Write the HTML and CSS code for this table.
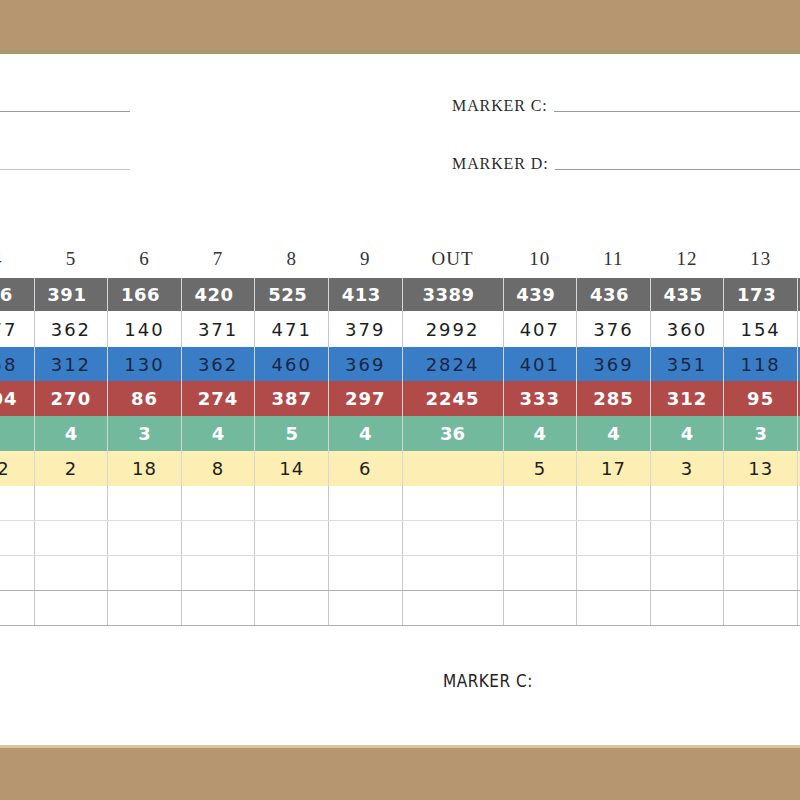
FILE: index.html
```html
<!DOCTYPE html>
<html>
<head>
<meta charset="utf-8">
<link rel="stylesheet" href="styles.css">
</head>
<body>
<div class="band band-top"></div>
<section class="markers">
  <div class="markers-left">
    <div class="mrow"><span class="fill"></span></div>
    <div class="mrow"><span class="fill light"></span></div>
  </div>
  <div class="markers-right">
    <div class="mrow"><span class="label">MARKER C:</span><span class="fill"></span></div>
    <div class="mrow"><span class="label">MARKER D:</span><span class="fill"></span></div>
  </div>
</section>
<table class="card">
  <colgroup>
    <col class="c"><col class="c"><col class="c"><col class="c"><col class="c"><col class="c">
    <col class="out">
    <col class="c"><col class="c"><col class="c"><col class="c"><col class="c">
  </colgroup>
  <tr class="head"><td>4</td><td>5</td><td>6</td><td>7</td><td>8</td><td>9</td><td>OUT</td><td>10</td><td>11</td><td>12</td><td>13</td><td></td></tr>
  <tr class="gray"><td>366</td><td>391</td><td>166</td><td>420</td><td>525</td><td>413</td><td>3389</td><td>439</td><td>436</td><td>435</td><td>173</td><td></td></tr>
  <tr class="white"><td>377</td><td>362</td><td>140</td><td>371</td><td>471</td><td>379</td><td>2992</td><td>407</td><td>376</td><td>360</td><td>154</td><td></td></tr>
  <tr class="blue"><td>358</td><td>312</td><td>130</td><td>362</td><td>460</td><td>369</td><td>2824</td><td>401</td><td>369</td><td>351</td><td>118</td><td></td></tr>
  <tr class="red"><td>304</td><td>270</td><td>86</td><td>274</td><td>387</td><td>297</td><td>2245</td><td>333</td><td>285</td><td>312</td><td>95</td><td></td></tr>
  <tr class="green"><td></td><td>4</td><td>3</td><td>4</td><td>5</td><td>4</td><td>36</td><td>4</td><td>4</td><td>4</td><td>3</td><td></td></tr>
  <tr class="yellow"><td>12</td><td>2</td><td>18</td><td>8</td><td>14</td><td>6</td><td></td><td>5</td><td>17</td><td>3</td><td>13</td><td></td></tr>
  <tr class="blank"><td></td><td></td><td></td><td></td><td></td><td></td><td></td><td></td><td></td><td></td><td></td><td></td></tr>
  <tr class="blank"><td></td><td></td><td></td><td></td><td></td><td></td><td></td><td></td><td></td><td></td><td></td><td></td></tr>
  <tr class="blank dark"><td></td><td></td><td></td><td></td><td></td><td></td><td></td><td></td><td></td><td></td><td></td><td></td></tr>
  <tr class="blank dark last"><td></td><td></td><td></td><td></td><td></td><td></td><td></td><td></td><td></td><td></td><td></td><td></td></tr>
</table>
<div class="footer"><span class="foot-label">MARKER C:</span></div>
<div class="band band-bottom"></div>
</body>
</html>
```
FILE: styles.css
```css
html, body {
  margin: 0;
  padding: 0;
}
body {
  width: 800px;
  height: 800px;
  overflow: hidden;
  background: #ffffff;
  font-family: "DejaVu Sans", sans-serif;
}
.band {
  background: #b69670;
}
.band-top {
  height: 50px;
  border-bottom: 4px solid #a8986c;
}
.band-bottom {
  height: 52px;
  border-top: 3px solid #d9c79c;
}
.markers {
  display: flex;
  height: 186px;
}
.markers-left {
  width: 130px;
  display: flex;
  flex-direction: column;
}
.markers-right {
  margin-left: 322px;
  flex: 1;
  display: flex;
  flex-direction: column;
}
.mrow {
  height: 58px;
  display: flex;
  align-items: flex-end;
}
.label {
  font-family: "Liberation Serif", serif;
  font-size: 16px;
  letter-spacing: 0.9px;
  color: #2b2b2b;
  line-height: 16px;
  margin-bottom: -2px;
  white-space: nowrap;
}
.fill {
  flex: 1;
  margin-left: 6px;
  border-bottom: 1px solid #9a9a9a;
}
.markers-left .fill {
  margin-left: 0;
}
.fill.light {
  border-bottom-color: #c4c4c4;
}
.card {
  margin-left: -40px;
  border-collapse: collapse;
  table-layout: fixed;
  width: 910px;
}
.card col.c { width: 73.6px; }
.card col.out { width: 101px; }
.card td {
  padding: 0;
  text-align: center;
  font-size: 18px;
  border-left: 1px solid rgba(0,0,0,0.16);
  border-right: 1px solid rgba(0,0,0,0.16);
  white-space: nowrap;
  overflow: hidden;
}
.head td {
  height: 38px;
  border: none;
  font-family: "Liberation Serif", serif;
  font-size: 19px;
  color: #333;
  letter-spacing: 1px;
  padding-bottom: 0;
}
.gray td {
  height: 33px;
  background: #6b6b6b;
  color: #fff;
  font-weight: bold;
  padding-right: 8px;
  letter-spacing: 0.5px;
}
.white td {
  height: 36px;
  color: #1e1e1e;
  letter-spacing: 2px;
  border-left-color: #c8c8c8;
  border-right-color: #c8c8c8;
}
.blue td {
  height: 34px;
  background: #3a7dc7;
  color: #1a2744;
  letter-spacing: 2px;
}
.red td {
  height: 35px;
  background: #b14b4a;
  color: #fff;
  font-weight: bold;
  letter-spacing: 1px;
}
.green td {
  height: 35px;
  background: #72b99e;
  color: #fff;
  font-weight: bold;
}
.yellow td {
  height: 35px;
  background: #fdeeb4;
  color: #1e1e1e;
  letter-spacing: 1px;
}
.blank td {
  height: 34px;
  border-left-color: #c8c8c8;
  border-right-color: #c8c8c8;
  border-bottom: 1px solid #dcdcdc;
}
.blank.dark td {
  border-bottom-color: #b0b0b0;
}
.footer {
  height: 119px;
  padding-left: 443px;
  box-sizing: border-box;
  padding-top: 45px;
}
.foot-label {
  font-family: "Liberation Sans Narrow", "DejaVu Sans Condensed", sans-serif;
  font-stretch: condensed;
  font-size: 17px;
  color: #222;
  letter-spacing: 0.5px;
}
```
